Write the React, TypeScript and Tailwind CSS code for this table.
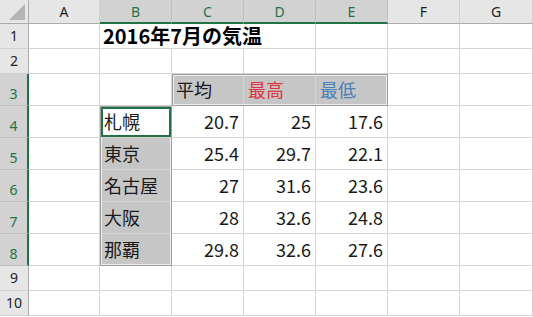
import React from 'react';

const COLS = ['A', 'B', 'C', 'D', 'E', 'F', 'G'];

const names = ['札幌', '東京', '名古屋', '大阪', '那覇'];
const temps = [
    ['20.7', '25', '17.6'],
    ['25.4', '29.7', '22.1'],
    ['27', '31.6', '23.6'],
    ['28', '32.6', '24.8'],
    ['29.8', '32.6', '27.6'],
];

const selectedCols = ['B', 'C', 'D', 'E'];
const isSelRow = (r: number) => r >= 3 && r <= 8;

const cellFont = { fontFamily: '"Noto Sans CJK JP", "Noto Sans", sans-serif' };
const headFont = { fontFamily: '"Noto Sans", "Liberation Sans", sans-serif' };

export default function App() {
    const cells: React.ReactNode[] = [];

    // corner
    cells.push(
        <div key="corner" className="bg-[#e6e6e6] border-r border-b border-r-[#ababab] border-b-[#ababab] flex items-end justify-end p-[3px]">
            <svg width="16" height="16" viewBox="0 0 16 16">
                <polygon points="16,0 16,16 0,16" fill="#b4b4b4" />
            </svg>
        </div>
    );

    // column headers
    COLS.forEach(c => {
        const sel = selectedCols.includes(c);
        cells.push(
            <div
                key={'h' + c}
                style={headFont}
                className={sel
                    ? 'bg-[#d2d2d2] border-r border-r-[#c0c0c0] border-b-2 border-b-[#217346] text-[#217346] text-[14px] flex items-center justify-center'
                    : 'bg-[#e6e6e6] border-r border-r-[#d0d0d0] border-b border-b-[#ababab] text-[#222] text-[14px] flex items-center justify-center'}
            >
                {c}
            </div>
        );
    });

    for (let r = 1; r <= 10; r++) {
        const sel = isSelRow(r);
        cells.push(
            <div
                key={'r' + r}
                style={headFont}
                className={sel
                    ? 'bg-[#d2d2d2] border-r-2 border-r-[#217346] border-b border-b-[#c0c0c0] text-[#217346] text-[14px] leading-[18px] flex items-end justify-center pb-[2px]'
                    : 'bg-[#e6e6e6] border-r border-r-[#ababab] border-b border-b-[#d0d0d0] text-[#222] text-[14px] leading-[18px] flex items-end justify-center pb-[3px]'}
            >
                {r}
            </div>
        );

        COLS.forEach((c, ci) => {
            const key = c + r;
            if (r === 1 && (c === 'C' || c === 'D')) return;
            if (r === 1 && c === 'B') {
                // title overflows across B1:D1, so those gridlines are hidden
                cells.push(
                    <div key={key} style={cellFont} className="col-span-3 border-r border-b border-[#d4d4d4] flex items-end px-[3px] pb-[1px] text-[20px] leading-[22px] font-bold text-black whitespace-nowrap">
                        2016年7月の気温
                    </div>
                );
                return;
            }

            let content: React.ReactNode = null;
            let overlay: React.ReactNode = null;
            let cls = 'relative border-r border-b border-[#d4d4d4] flex items-end px-[4px] pb-[4px] text-[18px] leading-[24px] whitespace-nowrap';

            if (r === 3 && ci >= 2 && ci <= 4) {
                const label = ['平均', '最高', '最低'][ci - 2];
                const color = ['text-[#1a1a1a]', 'text-[#e0353f]', 'text-[#4a7ebb]'][ci - 2];
                cls += ' bg-[#c6c6c6] border-[#b8b8b8] ' + color;
                content = label;
                if (ci === 2) {
                    overlay = <div className="absolute left-0 top-0 w-[216px] h-[32px] border border-[#9e9e9e] shadow-[inset_0_0_0_1px_#ececec] pointer-events-none z-10" />;
                }
            }
            if (r >= 4 && r <= 8) {
                if (c === 'B') {
                    content = names[r - 4];
                    cls += r === 4 ? ' bg-white text-[#1a1a1a]' : ' bg-[#c6c6c6] border-[#b8b8b8] text-[#1a1a1a]';
                    if (r === 4) {
                        overlay = (
                            <>
                                <div className="absolute left-0 top-0 w-[72px] h-[160px] border border-[#9e9e9e] shadow-[inset_0_0_0_1px_#ececec] pointer-events-none z-10" />
                                <div className="absolute left-[1px] top-[1px] w-[70px] h-[30px] border-2 border-[#217346] pointer-events-none z-20" />
                            </>
                        );
                    }
                } else if (ci >= 2 && ci <= 4) {
                    content = temps[r - 4][ci - 2];
                    cls += ' justify-end text-[#1a1a1a]';
                }
            }
            cells.push(
                <div key={key} style={cellFont} className={cls}>
                    {content}
                    {overlay}
                </div>
            );
        });
    }

    return (
        <div className="w-[533px] h-[317px] bg-white overflow-hidden">
            <div className="grid grid-cols-[29px_71px_72px_72px_72px_72px_72px_73px] grid-rows-[24px_25px_25px_32px_32px_32px_32px_32px_32px_25px_25px]">
                {cells}
            </div>
        </div>
    );
}
